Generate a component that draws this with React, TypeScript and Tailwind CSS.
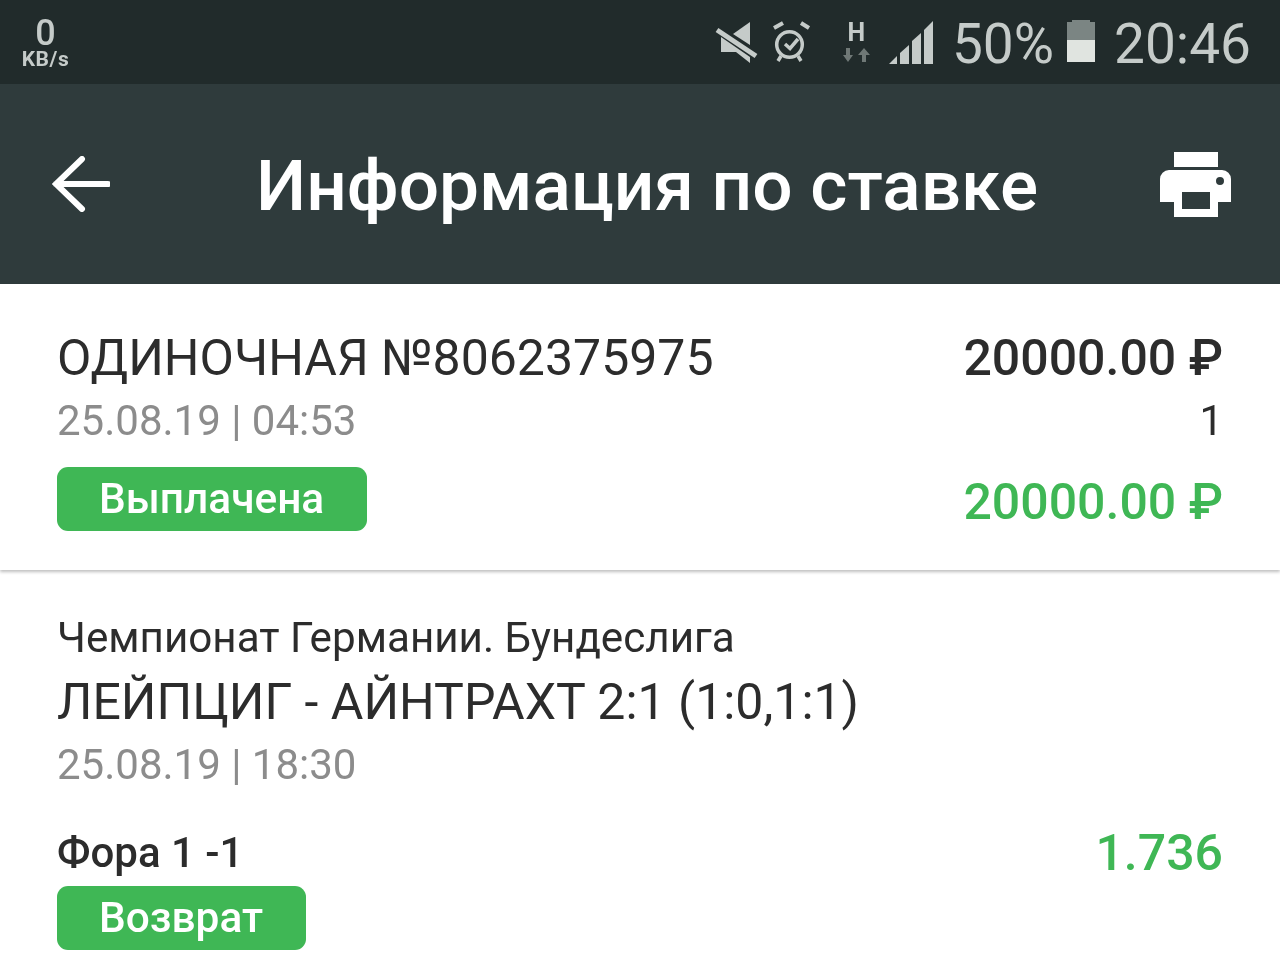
const roboto = "font-['Roboto',sans-serif]";

function StatusBar() {
    return (
        <div className="h-[84px] bg-[#212b2b] flex items-center justify-between pl-[21px] pr-[29px] text-[#c5cbc9]">
            <div className="flex flex-col items-center w-[49px]">
                <span className="text-[36px] leading-[32px] font-medium">0</span>
                <span className="text-[21px] leading-[18px] font-bold tracking-[0.6px] mt-[1px]">KB/s</span>
            </div>
            <div className="flex items-center">
                {/* muted */}
                <svg width="44" height="44" viewBox="0 0 44 44" className="mr-[12px]" fill="currentColor">
                    <path d="M18 14 L35 2 V25 Z" />
                    <path d="M6 17 L35 37 V43 L21 32 H6 Z" />
                    <path d="M2 10 L41 36" stroke="currentColor" strokeWidth="5" />
                </svg>
                {/* alarm */}
                <svg width="40" height="44" viewBox="0 0 40 44" className="mr-[32px]" fill="none" stroke="currentColor" strokeWidth="3.5">
                    <circle cx="18.5" cy="24.5" r="12.8" />
                    <path d="M3 8 L12 3 M30 3 L38 8" strokeWidth="4" />
                    <path d="M10 36 L7 41 M27 36 L30 41" />
                    <path d="M14 24 L19 28.5 L27 19" />
                </svg>
                {/* H network */}
                <div className="flex flex-col items-center mr-[19px] w-[27px]">
                    <span className="text-[25px] leading-[22px] font-bold">H</span>
                    <svg width="27" height="16" viewBox="0 0 27 16" fill="#6f7876" className="mt-[3px]">
                        <path d="M3 1 H7 V8 H10 L5 15 L0 8 H3 Z" />
                        <path d="M19 15 H23 V8 H27 L21 1 L15 8 H19 Z" />
                    </svg>
                </div>
                {/* signal */}
                <svg width="44" height="44" viewBox="0 0 44 44" className="mr-[19px]" fill="currentColor">
                    <path d="M0 44 L8 36 V44 Z" />
                    <path d="M11 33 L20 25 V44 H11 Z" />
                    <path d="M23 21 L32 13 V44 H23 Z" />
                    <path d="M35 10 L44 1 V44 H35 Z" />
                </svg>
                <span className="text-[55px] leading-none mr-[13px] mt-[5px]">50%</span>
                {/* battery */}
                <div className="w-[28px] h-[42px] flex flex-col mr-[19px] mb-[2px]">
                    <div className="h-[2px] mx-[5px] bg-[#7b8583]" />
                    <div className="h-[18px] bg-[#7b8583]" />
                    <div className="flex-1 bg-[#e0e4e0]" />
                </div>
                <span className="text-[55px] leading-none mt-[5px]">20:46</span>
            </div>
        </div>
    );
}

function Header() {
    return (
        <div className="h-[200px] bg-[#2f3b3c] flex items-center justify-between pl-[52px] pr-[49px] text-white">
            <svg width="58" height="56" viewBox="0 0 58 56" fill="none" stroke="currentColor" strokeWidth="6" strokeLinecap="round">
                <path d="M4 28 H56 M30 3 L4 28 L30 53" />
            </svg>
            <h1 className="text-[71.2px] leading-none font-medium ml-[24px] mt-[4px]">Информация по ставке</h1>
            <svg width="71" height="65" viewBox="0 0 71 65" fill="currentColor">
                <path d="M14 0 H58 V15 H14 Z" />
                <path fillRule="evenodd" d="M9 18 H62 A9 9 0 0 1 71 27 V50 H58 V65 H14 V50 H0 V27 A9 9 0 0 1 9 18 Z M22 40 V57 H50 V40 Z M60 25 A4 4 0 1 0 60 33 A4 4 0 1 0 60 25 Z" />
            </svg>
        </div>
    );
}

function Badge({ text, w }: { text: string; w: string }) {
    return (
        <div className={`${w} h-[64px] bg-[#3fb755] rounded-[11px] flex items-center pl-[42px] text-white text-[42.4px] leading-none font-medium`}>
            {text}
        </div>
    );
}

export default function App() {
    return (
        <div className={`${roboto} w-[1280px] h-[977px] bg-white overflow-hidden blur-[0.6px]`}>
            <StatusBar />
            <Header />

            {/* Bet summary */}
            <div className="h-[286px] px-[57px] pt-[46px] shadow-[0_2px_3px_rgba(0,0,0,0.25)]">
                <div className="flex justify-between items-center h-[56px] text-[50px] leading-none text-[#2c2c2c]">
                    <span>ОДИНОЧНАЯ №8062375975</span>
                    <span className="font-medium">20000.00 ₽</span>
                </div>
                <div className="flex justify-between items-center h-[56px] mt-[7px] text-[42px] leading-none">
                    <span className="text-[#8c8c8c]">25.08.19 | 04:53</span>
                    <span className="text-[#2c2c2c]">1</span>
                </div>
                <div className="flex justify-between mt-[18px]">
                    <Badge text="Выплачена" w="w-[310px]" />
                    <span className="text-[50px] leading-none font-medium text-[#3fb755] mt-[10px]">20000.00 ₽</span>
                </div>
            </div>

            {/* Event */}
            <div className="px-[57px] pt-[45px]">
                <div className="text-[42.2px] leading-[46px] text-[#2c2c2c]">Чемпионат Германии. Бундеслига</div>
                <div className="text-[50px] leading-[56px] mt-[13px] text-[#2c2c2c]">ЛЕЙПЦИГ - АЙНТРАХТ 2:1 (1:0,1:1)</div>
                <div className="text-[42px] leading-[56px] mt-[7px] text-[#8c8c8c]">25.08.19 | 18:30</div>
                <div className="flex justify-between items-center mt-[32px] h-[56px]">
                    <span className="text-[42px] leading-none font-medium text-[#2c2c2c]">Фора 1 -1</span>
                    <span className="text-[50px] leading-none font-medium text-[#3fb755]">1.736</span>
                </div>
                <div className="mt-[5px]">
                    <Badge text="Возврат" w="w-[249px]" />
                </div>
            </div>
        </div>
    );
}
